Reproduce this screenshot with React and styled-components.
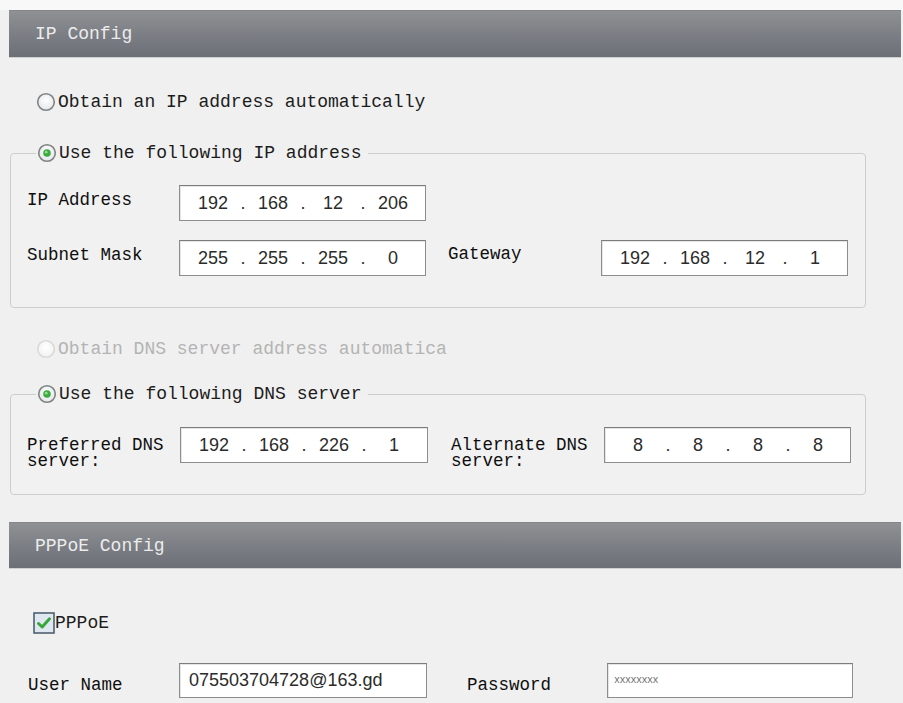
import { Fragment } from "react";
import styled, { createGlobalStyle } from "styled-components";

const GlobalStyle = createGlobalStyle`
  html, body {
    margin: 0;
    padding: 0;
    background: #f0f0f0;
  }
  body {
    font-family: "Liberation Mono", "DejaVu Sans Mono", monospace;
    color: #1c1c1c;
  }
`;

const Page = styled.div`
  width: 903px;
  min-height: 703px;
  box-sizing: border-box;
  padding: 10px 2px 0 9px;
  background: linear-gradient(#f8f8f8 0 10px, #f0f0f0 10px);
`;

const SectionBar = styled.div`
  height: ${(p) => p.$h}px;
  margin-top: ${(p) => p.$top || 0}px;
  display: flex;
  align-items: center;
  padding-left: 26px;
  box-sizing: border-box;
  background: linear-gradient(#8f9193, #7a7d83 55%, #6c6f75);
  border-top: 1px solid #84878a;
  border-bottom: 1px solid #cfd0d2;
  color: #ececec;
  font-size: 18px;
`;

const OptionRow = styled.div`
  display: flex;
  align-items: center;
  height: 24px;
  margin: ${(p) => p.$top}px 0 0 27px;
  font-size: 18px;
  color: ${(p) => (p.$disabled ? "#b4b4b4" : "#1c1c1c")};
  white-space: nowrap;
`;

const OptionText = styled.span`
  margin-left: 2px;
`;

const Group = styled.fieldset`
  margin: ${(p) => p.$top}px 0 0 1px;
  width: 856px;
  box-sizing: border-box;
  border: 1px solid #cdcdcd;
  border-radius: 4px;
  padding: ${(p) => p.$pad};
  background: #f1f1f1;
`;

const Legend = styled.legend`
  display: flex;
  align-items: center;
  height: 24px;
  margin-left: 9px;
  padding: 0 7px 0 1px;
  font-size: 18px;
  color: #1c1c1c;
`;

const Row = styled.div`
  display: flex;
  align-items: flex-start;
  margin-top: ${(p) => p.$top || 0}px;
`;

const Label = styled.div`
  width: ${(p) => p.$w}px;
  margin-left: ${(p) => p.$gap || 0}px;
  padding-top: ${(p) => p.$top}px;
  font-size: 17.5px;
  line-height: ${(p) => p.$lh || 20}px;
  color: #0e0e0e;
  white-space: pre;
  flex-shrink: 0;
`;

const Box = styled.div`
  width: ${(p) => p.$w}px;
  height: ${(p) => p.$h || 36}px;
  box-sizing: border-box;
  display: flex;
  align-items: center;
  padding-left: 9px;
  background: #fff;
  border: 1px solid #8c8d8e;
  border-top-color: #7b7c7e;
  box-shadow: inset 1px 1px 0 #e6e6e6;
  flex-shrink: 0;
  font-family: "Liberation Sans", Arial, sans-serif;
  font-size: 18px;
  color: #2b2b2b;
`;

const Octet = styled.span`
  width: 48px;
  text-align: center;
`;

const Dot = styled.span`
  width: 12px;
  text-align: center;
`;

const Masked = styled.span`
  font-family: "Liberation Mono", monospace;
  font-size: 10px;
  color: #6e6e6e;
  margin-left: -3px;
  letter-spacing: -0.5px;
`;

const PppoeBody = styled.div`
  padding-left: 19px;
`;

const CheckRow = styled.div`
  display: flex;
  align-items: center;
  height: 22px;
  margin: 43px 0 0 5px;
  font-size: 18px;
`;

const Radio = ({ checked, disabled }) => {
  const ring = disabled ? "#d9d9d9" : "#7e8384";
  const id = checked ? "rg-on" : disabled ? "rg-dis" : "rg-off";
  return (
    <svg width="20" height="20" viewBox="0 0 20 20">
      <defs>
        <radialGradient id={id} cx="50%" cy="40%" r="60%">
          <stop offset="0" stopColor="#ffffff" />
          <stop offset="1" stopColor={disabled ? "#f1f1f1" : "#e4e6e8"} />
        </radialGradient>
      </defs>
      <circle cx="10" cy="10" r="8.3" fill={`url(#${id})`} stroke={ring} strokeWidth="1.6" />
      {checked && <circle cx="10" cy="10" r="3.8" fill="#3daa3f" />}
      {checked && <circle cx="9.2" cy="9.2" r="1.4" fill="#8fe08f" />}
    </svg>
  );
};

const Check = () => (
  <svg width="22" height="22" viewBox="0 0 22 22">
    <rect x="1" y="1" width="20" height="20" fill="#dfe8ee" stroke="#4f5f70" strokeWidth="1.6" />
    <path
      d="M5.5 11.5 L9.2 15 L16.5 6.8"
      fill="none"
      stroke="#3aa53a"
      strokeWidth="3"
      strokeLinecap="round"
      strokeLinejoin="round"
    />
  </svg>
);

const IpBox = ({ parts, w }) => (
  <Box $w={w}>
    {parts.map((p, i) => (
      <Fragment key={i}>
        {i > 0 && <Dot>.</Dot>}
        <Octet>{p}</Octet>
      </Fragment>
    ))}
  </Box>
);

export default function App() {
  return (
    <>
      <GlobalStyle />
      <Page>
        <SectionBar $h={48}>IP Config</SectionBar>

        <OptionRow $top={32}>
          <Radio />
          <OptionText>Obtain an IP address automatically</OptionText>
        </OptionRow>

        <Group $top={27} $pad="20px 0 31px 16px">
          <Legend>
            <Radio checked />
            <OptionText>Use the following IP address</OptionText>
          </Legend>
          <Row>
            <Label $w={152} $top={5}>IP Address</Label>
            <IpBox w={247} parts={["192", "168", "12", "206"]} />
          </Row>
          <Row $top={19}>
            <Label $w={152} $top={5}>Subnet Mask</Label>
            <IpBox w={247} parts={["255", "255", "255", "0"]} />
            <Label $w={153} $gap={22} $top={4}>Gateway</Label>
            <IpBox w={247} parts={["192", "168", "12", "1"]} />
          </Row>
        </Group>

        <OptionRow $top={29} $disabled>
          <Radio disabled />
          <OptionText>Obtain DNS server address automatica</OptionText>
        </OptionRow>

        <Group $top={21} $pad="21px 0 25px 16px">
          <Legend>
            <Radio checked />
            <OptionText>Use the following DNS server</OptionText>
          </Legend>
          <Row>
            <Label $w={153} $top={10} $lh={16}>{"Preferred DNS\nserver:"}</Label>
            <IpBox w={248} parts={["192", "168", "226", "1"]} />
            <Label $w={153} $gap={23} $top={10} $lh={16}>{"Alternate DNS\nserver:"}</Label>
            <IpBox w={247} parts={["8", "8", "8", "8"]} />
          </Row>
        </Group>

        <SectionBar $h={47} $top={27}>PPPoE Config</SectionBar>

        <PppoeBody>
          <CheckRow>
            <Check />
            <span>PPPoE</span>
          </CheckRow>
          <Row $top={29}>
            <Label $w={151} $top={12}>User Name</Label>
            <Box $w={248} $h={35}>075503704728@163.gd</Box>
            <Label $w={140} $gap={40} $top={12}>Password</Label>
            <Box $w={246} $h={35}>
              <Masked>xxxxxxxx</Masked>
            </Box>
          </Row>
        </PppoeBody>
      </Page>
    </>
  );
}
